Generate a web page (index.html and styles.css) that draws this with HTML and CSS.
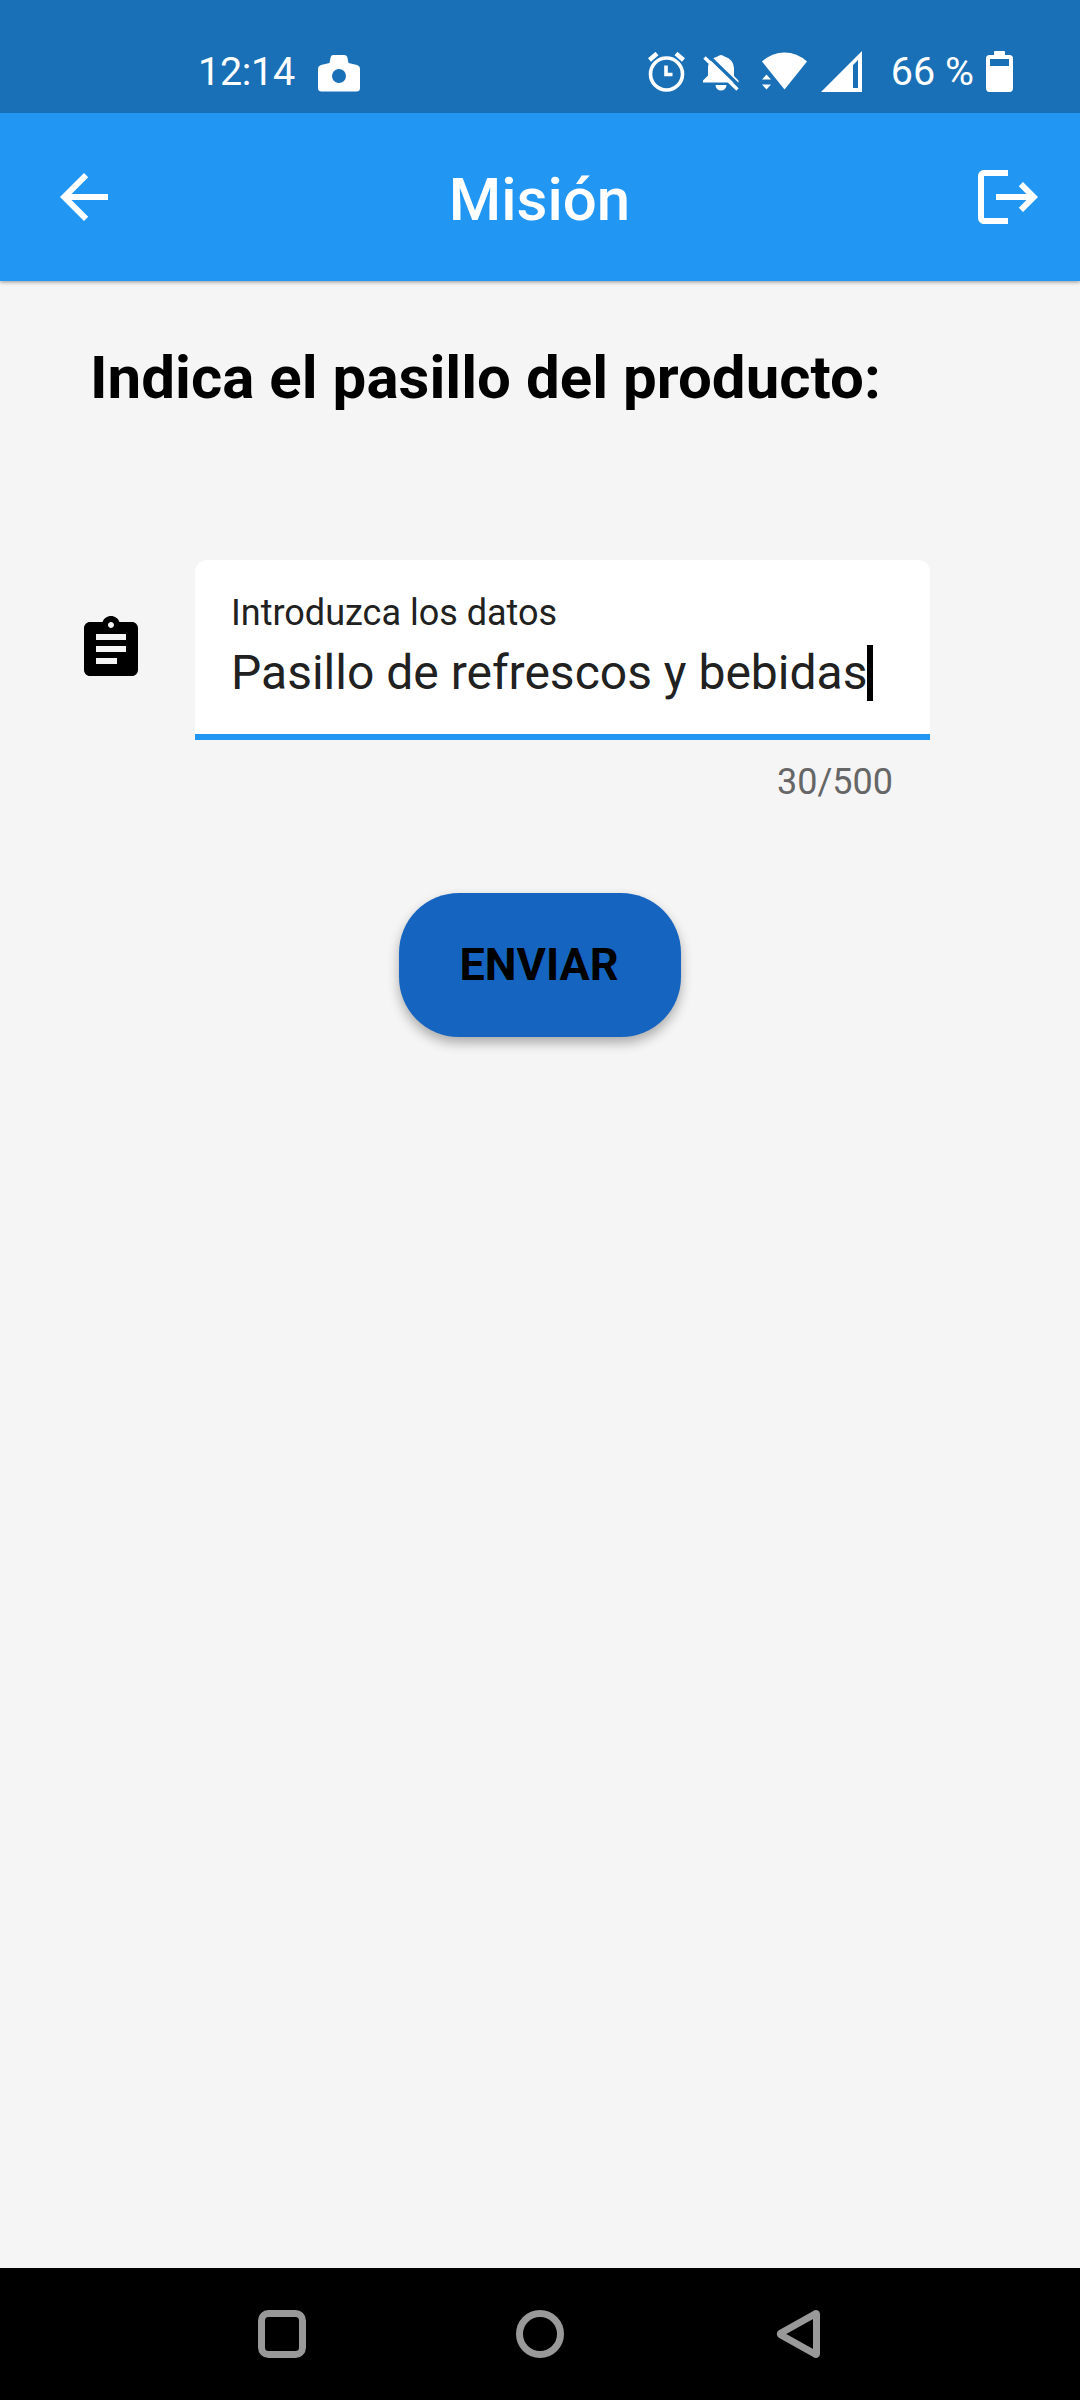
FILE: index.html
```html
<!DOCTYPE html>
<html lang="es">
<head>
<meta charset="utf-8">
<title>Misión</title>
<link rel="stylesheet" href="styles.css">
</head>
<body>
<div class="screen">
  <div class="status-bar">
    <span class="status-text clock">12:14</span>
    <svg class="camera" width="42" height="37" viewBox="0 0 42 37"><path fill-rule="evenodd" d="M15 0H26Q29 0 29.500 3L30.500 8L39 10Q42 11 42 14V33Q42 36.500 38.500 36.500H3.500Q0 36.500 0 33V14Q0 11 3 10L11.500 8L12.500 3Q13 0 15 0ZM21 14A7 7 0 1 0 21 28A7 7 0 1 0 21 14Z"/></svg>
    <div class="status-icons">
      <svg width="37" height="40" viewBox="0 0 37 40"><circle cx="18.500" cy="22" r="16" fill="none" stroke="#fff" stroke-width="3.600"/><path d="M1.500 8L9 1.500M28 1.500L35.500 8" stroke="#fff" stroke-width="4.500"/><path d="M18 13.500V22.500H24.500" fill="none" stroke="#fff" stroke-width="3.600"/></svg>
      <svg class="bell" width="36" height="38" viewBox="0 0 36 38"><path d="M8.500 5.500Q11 3.500 14.500 2.500Q18 -.5 21.500 2.500Q30.500 5.500 31 14V22L35.500 26.500V28.500H0V26.500L5 21.500V14Q5 10 7 8ZM12.500 31H23.500A5.500 5.500 0 0 1 12.500 31Z"/><path d="M4 .5L37 32.500" stroke="#1a70b7" stroke-width="3.400"/><path d="M1.500 3.500L34.500 35.500" stroke="#fff" stroke-width="3.400"/></svg>
      <svg class="wifi" width="46" height="40" viewBox="0 0 46 40"><path d="M0 9.500Q10 .5 22.500 .5T45 9.500L22.500 37.500Z"/><path d="M0 27.500L4.500 22.500L9 27.500ZM0 32.500L4.500 37.500L9 32.500Z"/></svg>
      <svg class="signal" width="41" height="41" viewBox="0 0 41 41"><path fill-rule="evenodd" d="M41 0V41H0ZM32 14V37H37V9Z"/></svg>
    </div>
    <span class="status-text battery-text">66 %</span>
    <svg class="battery" width="27" height="41" viewBox="0 0 27 41"><path fill-rule="evenodd" d="M8 1Q8 0 9 0H18Q19 0 19 1V4H23.500Q27 4 27 7.500V37Q27 41 23.500 41H3.500Q0 41 0 37V7.500Q0 4 3.500 4H8ZM4 8V15H23V8Z"/></svg>
  </div>
  <header class="app-bar">
    <svg width="72" height="72" viewBox="0 0 24 24"><path d="M20 11H7.830l5.590-5.590L12 4l-8 8 8 8 1.410-1.410L7.830 13H20v-2z"/></svg>
    <h1 class="title">Misión</h1>
    <svg width="72" height="72" viewBox="0 0 24 24"><path d="M17 7l-1.410 1.410L18.170 11H8v2h10.170l-2.580 2.580L17 17l5-5zM4 5h8V3H4c-1.100 0-2 .9-2 2v14c0 1.100.9 2 2 2h8v-2H4V5z"/></svg>
  </header>
  <main class="content">
    <h2 class="question">Indica el pasillo del producto:</h2>
    <div class="field-row">
      <svg class="field-icon" width="72" height="72" viewBox="0 0 24 24"><path d="M19 3h-4.180C14.400 1.840 13.300 1 12 1c-1.300 0-2.400.84-2.820 2H5c-1.100 0-2 .9-2 2v14c0 1.100.9 2 2 2h14c1.100 0 2-.9 2-2V5c0-1.100-.9-2-2-2zm-7 0c.55 0 1 .45 1 1s-.45 1-1 1-1-.45-1-1 .45-1 1-1zm2 14H7v-2h7v2zm3-4H7v-2h10v2zm0-4H7V7h10v2z"/></svg>
      <div class="field">
        <div class="field-box">
          <div class="label">Introduzca los datos</div>
          <div class="value"><span>Pasillo de refrescos y bebidas</span><i class="caret"></i></div>
        </div>
        <div class="counter">30/500</div>
      </div>
    </div>
    <button class="send">ENVIAR</button>
  </main>
  <nav class="nav-bar">
    <svg width="50" height="50" viewBox="0 0 50 50"><rect x="4.500" y="4.500" width="41" height="41" rx="7"/></svg>
    <svg width="50" height="50" viewBox="0 0 50 50"><circle cx="25" cy="25" r="20.500"/></svg>
    <svg width="50" height="50" viewBox="0 0 50 50"><path d="M43.500 5.500Q43.500 4 42 5L8 24Q6.500 25 8 26L42 45Q43.500 46 43.500 44.500Z" stroke-linejoin="round"/></svg>
  </nav>
</div>
</body>
</html>
```
FILE: styles.css
```css
* { box-sizing: border-box; }

body {
  margin: 0;
  font-family: Roboto, "Liberation Sans", sans-serif;
  background: #f5f5f5;
}

svg { display: block; flex: none; }

.screen {
  display: flex;
  flex-direction: column;
  width: 1080px;
  height: 2400px;
}

.status-bar {
  position: relative;
  z-index: 1;
  display: flex;
  align-items: center;
  height: 113px;
  padding: 30px 67px 0 198px;
  background: #1a70b7;
  color: #fff;
  fill: #fff;
}

.status-text {
  font-size: 39.500px;
  line-height: 46px;
  white-space: nowrap;
}

.clock { width: 97px; letter-spacing: -.3px; }

.camera { margin: 4px 0 0 23px; }

.status-icons {
  display: flex;
  align-items: center;
  margin-left: auto;
}

.bell { margin: 2px 0 0 18px; }
.wifi { margin-left: 23px; overflow: visible; }
.signal { margin-left: 13px; }
.battery-text { margin-left: 29px; }
.battery { margin-left: 12px; }

.app-bar {
  position: relative;
  display: flex;
  align-items: center;
  justify-content: space-between;
  height: 168px;
  padding: 0 36px 0 48px;
  background: #2196f3;
  box-shadow: 0 1px 4px rgba(0, 0, 0, .4);
  color: #fff;
  fill: #fff;
}

.title {
  margin: 0;
  padding: 5px 13px 0 0;
  font-size: 60px;
  font-weight: 500;
  line-height: 70px;
}

.content {
  flex: 1;
  display: flex;
  flex-direction: column;
  padding: 62px 150px 0 75px;
}

.question {
  margin: 0;
  padding-left: 15px;
  font-size: 60px;
  font-weight: 700;
  line-height: 70px;
  letter-spacing: .03px;
  color: #000;
  white-space: nowrap;
}

.field-row {
  display: flex;
  gap: 48px;
  margin-top: 147px;
}

.field-icon { margin-top: 53px; }

.field { flex: 1; }

.field-box {
  height: 180px;
  padding: 32px 36px 0;
  background: #fff;
  border-bottom: 6px solid #2196f3;
  border-radius: 12px 12px 0 0;
  color: #212121;
}

.label { font-size: 36px; line-height: 42px; }

.value {
  display: flex;
  margin-top: 11px;
  font-size: 48px;
  line-height: 56px;
  white-space: nowrap;
}

.caret { width: 6px; background: #000; }

.counter {
  padding: 21px 37px 0;
  font-size: 36px;
  line-height: 42px;
  text-align: right;
  color: #666;
}

.send {
  align-self: center;
  width: 282px;
  height: 144px;
  margin: 90px 0 0 75px;
  padding: 0 2px 0 0;
  border: 0;
  border-radius: 60px;
  background: #1565c0;
  box-shadow: 0 6px 12px rgba(0, 0, 0, .3);
  font: 700 45px/54px Roboto, "Liberation Sans", sans-serif;
  color: #000;
}

.nav-bar {
  display: flex;
  align-items: center;
  justify-content: space-between;
  height: 132px;
  padding: 0 257px;
  background: #000;
  fill: none;
  stroke: #999;
  stroke-width: 7;
}
```
